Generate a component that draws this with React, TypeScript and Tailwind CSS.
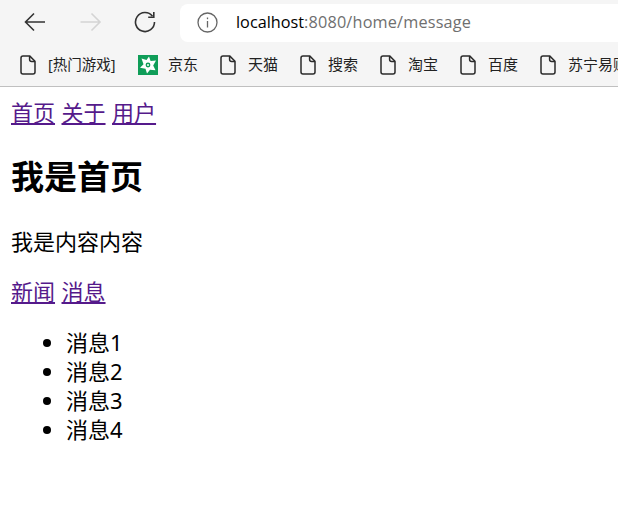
const bookmarks = [
  { name: "[热门游戏]", width: "w-[118px]", tight: true },
  { name: "京东", width: "w-[82px]", logo: true },
  { name: "天猫", width: "w-[80px]" },
  { name: "搜索", width: "w-[80px]" },
  { name: "淘宝", width: "w-[80px]" },
  { name: "百度", width: "w-[80px]" },
  { name: "苏宁易购", width: "w-[90px]" },
]

const messages = ["消息1", "消息2", "消息3", "消息4"]

function FileIcon() {
  return (
    <svg width="16" height="20" viewBox="0 0 16 20" fill="none" stroke="#2b2b2b" strokeWidth="1.5" className="shrink-0">
      <path d="M3 .9h6.600L15 6.300V17a2 2 0 0 1-2 2H3a2 2 0 0 1-2-2V3a2 2 0 0 1 2-2z" strokeLinejoin="round" />
      <path d="M9.600 1v3.400a2 2 0 0 0 2 2H15" />
    </svg>
  )
}

function JdLogo() {
  return (
    <svg width="20" height="20" viewBox="0 0 20 20" className="shrink-0">
      <rect width="20" height="20" fill="#0f9d58" />
      <path d="M11 1.500l1.600 4.500 5.400-.500-2.800 5 2.300 4.800-5.500-.500L9 18.500l-1.500-4.700-5.500-1 3.500-3.500L3.500 3.500l5 1.500z" fill="#fff" />
      <circle cx="10" cy="10" r="2.400" fill="#0f9d58" />
      <circle cx="10" cy="10" r="1" fill="#fff" />
    </svg>
  )
}

export default function App() {
  return (
    <div className="h-[516px] w-[618px] overflow-hidden bg-white font-['Noto_Sans','Noto_Sans_CJK_SC',sans-serif] text-black">
      {/* ===== TOOLBAR ===== */}
      <div className="flex h-[45px] items-center bg-[#f5f5f5] pb-[3px] pt-[3px]">
        <div className="flex w-[180px] shrink-0 items-center pl-[24px]">
          <svg width="22" height="20" viewBox="0 0 22 20" fill="none" stroke="#333" strokeWidth="1.6" className="mb-[2px]">
            <path d="M21 10H1.500M10 1.500L1.500 10l8.500 8.500" />
          </svg>
          <svg width="22" height="20" viewBox="0 0 22 20" fill="none" stroke="#d4d4d4" strokeWidth="1.600" className="mb-[2px] ml-[34px]">
            <path d="M.5 10h19.500M11.500 1.500l8.500 8.500-8.500 8.500" />
          </svg>
          <svg width="22" height="22" viewBox="0 0 22 22" fill="none" stroke="#333" strokeWidth="1.600" className="mb-[2px] ml-[32px]">
            <path d="M18.500 5.200A9.500 9.500 0 1 0 20.500 11" />
            <path d="M19.800 1v5.300h-5.600" />
          </svg>
        </div>
        <div className="flex h-[38px] flex-1 items-center rounded-l-[8px] bg-white pl-[17px]">
          <svg width="21" height="21" viewBox="0 0 21 21" fill="none" stroke="#666" strokeWidth="1.300" className="shrink-0">
            <circle cx="10.500" cy="10.500" r="9.500" />
            <path d="M10.500 9v6.500" />
            <path d="M10.500 5.500v1.700" />
          </svg>
          <span className="ml-[18px] whitespace-nowrap font-['Open_Sans',sans-serif] text-[16.250px] leading-none text-black">
            localhost<span className="tracking-[0.17px] text-[#6f6f6f]">:8080/home/message</span>
          </span>
        </div>
      </div>

      {/* ===== BOOKMARKS ===== */}
      <div className="flex h-[42px] items-center overflow-hidden border-b border-[#c0c0c0] bg-[#f5f5f5] pb-[2px] pl-[20px]">
        {bookmarks.map((b) => (
          <div key={b.name} className={`flex shrink-0 items-center ${b.width}`}>
            {b.logo ? <JdLogo /> : <FileIcon />}
            <span
              className={`whitespace-nowrap pb-[1px] leading-none text-[#222] ${b.logo ? "ml-[10px]" : "ml-[12px]"} ${
                b.tight ? "text-[14.500px]" : "text-[15px]"
              }`}
            >
              {b.name}
            </span>
          </div>
        ))}
      </div>

      {/* ===== PAGE ===== */}
      <div className="px-[11px] pt-[11px] text-[22px] leading-[29px]">
        <div className="flex gap-[6.500px]">
          <a className="text-[#551a8b] underline">首页</a>
          <a className="text-[#551a8b] underline">关于</a>
          <a className="text-[#551a8b] underline">用户</a>
        </div>
        <h1 className="mt-[28px] text-[33px] font-bold leading-[44px]">我是首页</h1>
        <p className="mt-[28px]">我是内容内容</p>
        <div className="mt-[21px] flex gap-[6.500px]">
          <a className="text-[#551a8b] underline">新闻</a>
          <a className="text-[#551a8b] underline">消息</a>
        </div>
        <ul className="mt-[22px] list-disc pl-[55px]">
          {messages.map((m) => (
            <li key={m}>{m}</li>
          ))}
        </ul>
      </div>
    </div>
  )
}
